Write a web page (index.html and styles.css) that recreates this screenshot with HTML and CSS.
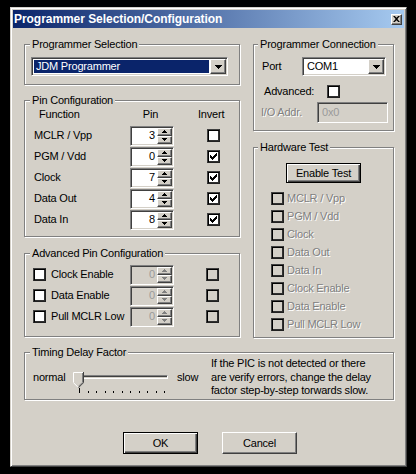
FILE: index.html
```html
<!DOCTYPE html>
<html>
<head>
<meta charset="utf-8">
<title>Programmer Selection/Configuration</title>
<link rel="stylesheet" href="styles.css">
</head>
<body>
<div class="window">
  <div class="titlebar">
    <span class="title">Programmer Selection/Configuration</span>
    <span class="close"><svg width="8" height="7" viewBox="0 0 8 7"><path d="M0 0h2l2 2 2-2h2L5 3.5 8 7H6L4 5 2 7H0l3-3.5z"/></svg></span>
  </div>
  <div class="client">
    <div class="columns">
      <div class="col col-left">
        <div class="group g-select">
          <span class="legend">Programmer Selection</span>
          <div class="combo combo-prog">
            <span class="combo-text sel">JDM Programmer</span>
            <span class="btn combo-btn"><svg width="7" height="4" viewBox="0 0 7 4"><path d="M0 0h7v1h-1v1h-1v1h-1v1h-1v-1h-1v-1h-1v-1h-1z"/></svg></span>
          </div>
        </div>

        <div class="group g-pins">
          <span class="legend">Pin Configuration</span>
          <div class="pin-grid">
            <span class="h-func">Function</span><span class="h-pin">Pin</span><span class="h-inv">Invert</span>

            <span class="lbl">MCLR / Vpp</span>
            <span class="spin"><span class="spin-val">3</span><span class="spin-btns"><span class="btn sb"><svg width="5" height="3" viewBox="0 0 5 3"><path d="M2 0h1v1h1v1h1v1H0V2h1V1h1z"/></svg></span><span class="btn sb"><svg width="5" height="3" viewBox="0 0 5 3"><path d="M0 0h5v1H4v1H3v1H2V2H1V1H0z"/></svg></span></span></span>
            <span class="cb inv"></span>

            <span class="lbl">PGM / Vdd</span>
            <span class="spin"><span class="spin-val">0</span><span class="spin-btns"><span class="btn sb"><svg width="5" height="3" viewBox="0 0 5 3"><path d="M2 0h1v1h1v1h1v1H0V2h1V1h1z"/></svg></span><span class="btn sb"><svg width="5" height="3" viewBox="0 0 5 3"><path d="M0 0h5v1H4v1H3v1H2V2H1V1H0z"/></svg></span></span></span>
            <span class="cb inv"><svg width="7" height="7" viewBox="0 0 7 7"><path d="M0 2h1v3H0zM1 3h1v3H1zM2 4h1v3H2zM3 3h1v3H3zM4 2h1v3H4zM5 1h1v3H5zM6 0h1v3H6z"/></svg></span>

            <span class="lbl">Clock</span>
            <span class="spin"><span class="spin-val">7</span><span class="spin-btns"><span class="btn sb"><svg width="5" height="3" viewBox="0 0 5 3"><path d="M2 0h1v1h1v1h1v1H0V2h1V1h1z"/></svg></span><span class="btn sb"><svg width="5" height="3" viewBox="0 0 5 3"><path d="M0 0h5v1H4v1H3v1H2V2H1V1H0z"/></svg></span></span></span>
            <span class="cb inv"><svg width="7" height="7" viewBox="0 0 7 7"><path d="M0 2h1v3H0zM1 3h1v3H1zM2 4h1v3H2zM3 3h1v3H3zM4 2h1v3H4zM5 1h1v3H5zM6 0h1v3H6z"/></svg></span>

            <span class="lbl">Data Out</span>
            <span class="spin"><span class="spin-val">4</span><span class="spin-btns"><span class="btn sb"><svg width="5" height="3" viewBox="0 0 5 3"><path d="M2 0h1v1h1v1h1v1H0V2h1V1h1z"/></svg></span><span class="btn sb"><svg width="5" height="3" viewBox="0 0 5 3"><path d="M0 0h5v1H4v1H3v1H2V2H1V1H0z"/></svg></span></span></span>
            <span class="cb inv"><svg width="7" height="7" viewBox="0 0 7 7"><path d="M0 2h1v3H0zM1 3h1v3H1zM2 4h1v3H2zM3 3h1v3H3zM4 2h1v3H4zM5 1h1v3H5zM6 0h1v3H6z"/></svg></span>

            <span class="lbl">Data In</span>
            <span class="spin"><span class="spin-val">8</span><span class="spin-btns"><span class="btn sb"><svg width="5" height="3" viewBox="0 0 5 3"><path d="M2 0h1v1h1v1h1v1H0V2h1V1h1z"/></svg></span><span class="btn sb"><svg width="5" height="3" viewBox="0 0 5 3"><path d="M0 0h5v1H4v1H3v1H2V2H1V1H0z"/></svg></span></span></span>
            <span class="cb inv"><svg width="7" height="7" viewBox="0 0 7 7"><path d="M0 2h1v3H0zM1 3h1v3H1zM2 4h1v3H2zM3 3h1v3H3zM4 2h1v3H4zM5 1h1v3H5zM6 0h1v3H6z"/></svg></span>
          </div>
        </div>

        <div class="group g-adv">
          <span class="legend">Advanced Pin Configuration</span>
          <div class="adv-grid">
            <span class="cb"></span>
            <span class="lbl">Clock Enable</span>
            <span class="spin dis"><span class="spin-val">0</span><span class="spin-btns"><span class="btn sb"><svg width="5" height="3" viewBox="0 0 5 3"><path d="M2 0h1v1h1v1h1v1H0V2h1V1h1z"/></svg></span><span class="btn sb"><svg width="5" height="3" viewBox="0 0 5 3"><path d="M0 0h5v1H4v1H3v1H2V2H1V1H0z"/></svg></span></span></span>
            <span class="cb dis inv2"></span>

            <span class="cb"></span>
            <span class="lbl">Data Enable</span>
            <span class="spin dis"><span class="spin-val">0</span><span class="spin-btns"><span class="btn sb"><svg width="5" height="3" viewBox="0 0 5 3"><path d="M2 0h1v1h1v1h1v1H0V2h1V1h1z"/></svg></span><span class="btn sb"><svg width="5" height="3" viewBox="0 0 5 3"><path d="M0 0h5v1H4v1H3v1H2V2H1V1H0z"/></svg></span></span></span>
            <span class="cb dis inv2"></span>

            <span class="cb"></span>
            <span class="lbl">Pull MCLR Low</span>
            <span class="spin dis"><span class="spin-val">0</span><span class="spin-btns"><span class="btn sb"><svg width="5" height="3" viewBox="0 0 5 3"><path d="M2 0h1v1h1v1h1v1H0V2h1V1h1z"/></svg></span><span class="btn sb"><svg width="5" height="3" viewBox="0 0 5 3"><path d="M0 0h5v1H4v1H3v1H2V2H1V1H0z"/></svg></span></span></span>
            <span class="cb dis inv2"></span>
          </div>
        </div>
      </div>

      <div class="col col-right">
        <div class="group g-conn">
          <span class="legend">Programmer Connection</span>
          <div class="conn-row">
            <span class="port-lbl">Port</span>
            <div class="combo combo-port">
              <span class="combo-text">COM1</span>
              <span class="btn combo-btn"><svg width="7" height="4" viewBox="0 0 7 4"><path d="M0 0h7v1h-1v1h-1v1h-1v1h-1v-1h-1v-1h-1v-1h-1z"/></svg></span>
            </div>
          </div>
          <div class="adv-row">
            <span class="adv-lbl">Advanced:</span>
            <span class="cb"></span>
          </div>
          <div class="io-row">
            <span class="io-lbl disabled">I/O Addr.</span>
            <span class="edit dis">0x0</span>
          </div>
        </div>

        <div class="group g-hw">
          <span class="legend">Hardware Test</span>
          <div class="hw-btn-row"><span class="button default hw-btn">Enable Test</span></div>
          <ul class="hw-list">
            <li><span class="cb dis"></span><span class="disabled">MCLR / Vpp</span></li>
            <li><span class="cb dis"></span><span class="disabled">PGM / Vdd</span></li>
            <li><span class="cb dis"></span><span class="disabled">Clock</span></li>
            <li><span class="cb dis"></span><span class="disabled">Data Out</span></li>
            <li><span class="cb dis"></span><span class="disabled">Data In</span></li>
            <li><span class="cb dis"></span><span class="disabled">Clock Enable</span></li>
            <li><span class="cb dis"></span><span class="disabled">Data Enable</span></li>
            <li><span class="cb dis"></span><span class="disabled">Pull MCLR Low</span></li>
          </ul>
        </div>
      </div>
    </div>

    <div class="group g-timing">
      <span class="legend">Timing Delay Factor</span>
      <span class="t-normal">normal</span>
      <div class="slider">
        <span class="track"></span>
        <svg class="thumb" width="11" height="16" viewBox="0 0 11 16">
          <path d="M0 0H11V10.5L5.5 16L0 10.5Z" fill="#D4D0C8"/>
          <path d="M0.5 10.5V0.5H10" stroke="#fff" fill="none"/>
          <path d="M0.5 10.7L5.3 15.5" stroke="#fff" fill="none"/>
          <path d="M10.5 0V10.7L5.5 15.7" stroke="#404040" fill="none"/>
          <path d="M9.5 1V10.3L5.5 14.3" stroke="#808080" fill="none"/>
        </svg>
        <div class="ticks">
          <i class="tick first"></i><i class="tick"></i><i class="tick"></i><i class="tick"></i><i class="tick"></i><i class="tick"></i><i class="tick"></i><i class="tick"></i><i class="tick"></i><i class="tick"></i><i class="tick"></i>
        </div>
      </div>
      <span class="t-slow">slow</span>
      <p class="t-help">If the PIC is not detected or there<br>are verify errors, change the delay<br>factor step-by-step torwards slow.</p>
    </div>

    <div class="buttons">
      <span class="button default dlg-btn">OK</span>
      <span class="button dlg-btn">Cancel</span>
    </div>
  </div>
</div>
</body>
</html>
```

FILE: styles.css
```css
* { box-sizing: border-box; }
html, body { margin: 0; padding: 0; }
body {
  background: #000;
  width: 416px;
  height: 474px;
  overflow: hidden;
  font-family: "Liberation Sans", Arial, sans-serif;
  font-size: 11px;
  letter-spacing: -0.2px;
  line-height: 13px;
  color: #000;
}

.window {
  margin: 7px 0 0 10px;
  width: 397px;
  height: 460px;
  background: #D4D0C8;
  border: 1px solid;
  border-color: #D4D0C8 #404040 #404040 #D4D0C8;
  box-shadow: inset 1px 1px 0 #fff, inset -1px -1px 0 #808080;
  padding: 2px;
}

.titlebar {
  height: 18px;
  display: flex;
  align-items: center;
  justify-content: space-between;
  padding: 0 1px 0 1px;
  background: linear-gradient(to right, #0A246A, #A6CAF0);
  color: #fff;
}
.title {
  font-weight: bold;
  font-size: 12px;
  letter-spacing: -0.05px;
}
.close {
  width: 11px;
  height: 11px;
  margin-right: 1px;
  display: flex;
  align-items: center;
  justify-content: center;
  background: #D4D0C8;
  border: 1px solid;
  border-color: #fff #404040 #404040 #fff;
  box-shadow: inset -1px -1px 0 #808080;
}
.close svg { width: 7px; height: 6px; }

.client { padding: 0 0 0 11px; }

.columns {
  display: flex;
  gap: 13px;
  padding-top: 16px;
  align-items: flex-start;
}
.col { display: flex; flex-direction: column; }
.col-left { width: 216px; }
.col-right { width: 141px; }

/* group box (etched) */
.group {
  position: relative;
  border: 1px solid #808080;
  box-shadow: inset 1px 1px 0 #fff, 1px 1px 0 #fff;
}
.legend {
  position: absolute;
  top: -7px;
  left: 5px;
  padding: 0 2px;
  background: #D4D0C8;
  line-height: 13px;
  white-space: nowrap;
}
.col-right .legend { left: 4px; }

/* raised button face */
.btn {
  display: flex;
  align-items: center;
  justify-content: center;
  background: #D4D0C8;
  border: 1px solid;
  border-color: #fff #404040 #404040 #fff;
  box-shadow: inset -1px -1px 0 #808080;
}

/* sunken field */
.combo, .spin, .edit {
  border: 1px solid;
  border-color: #808080 #fff #fff #808080;
  box-shadow: inset 1px 1px 0 #404040, inset -1px -1px 0 #D4D0C8;
  background: #fff;
}

.combo {
  display: flex;
  height: 19px;
  padding: 1px;
}
.combo-text {
  flex: 1;
  margin: 1px;
  padding-left: 2px;
  display: flex;
  align-items: center;
  white-space: nowrap;
}
.combo-text.sel { background: #0A246A; color: #fff; }
.combo-btn { width: 16px; }

/* Programmer Selection */
.g-select {
  height: 41px;
  padding: 12px 0 0 6px;
}
.combo-prog { width: 197px; }

/* Pin configuration */
.g-pins {
  margin-top: 15px;
  height: 137px;
  padding: 3px 0 0 9px;
}
.pin-grid {
  display: grid;
  grid-template-columns: 96px 44px 1fr;
  grid-auto-rows: 21px;
  align-items: center;
}
.h-func { padding-left: 5px; }
.h-pin { text-align: center; padding-right: 3px; }
.h-inv { margin-left: 24px; }
.cb.inv { margin-left: 33px; }

.spin {
  display: flex;
  width: 44px;
  height: 20px;
  padding: 1px;
}
.spin-val {
  flex: 1;
  display: flex;
  align-items: center;
  justify-content: flex-end;
  padding-right: 2px;
}
.spin-btns {
  width: 15px;
  display: flex;
  flex-direction: column;
}
.sb { height: 8px; flex: 0 0 8px; }
.spin.dis { background: #D4D0C8; }
.spin.dis .spin-val { color: #9a9a9a; }
.spin.dis .sb svg { fill: #808080; }

/* checkbox */
.cb {
  display: inline-flex;
  width: 13px;
  height: 13px;
  align-items: center;
  justify-content: center;
  background: #fff;
  border: 1px solid;
  border-color: #404040 #202020 #202020 #404040;
  box-shadow: inset 1px 1px 0 #000, inset -1px -1px 0 #303030;
  justify-self: start;
}
.cb.dis { background: #D4D0C8; }

/* Advanced pin config */
.g-adv {
  margin-top: 16px;
  height: 84px;
  padding: 10px 0 0 8px;
}
.adv-grid {
  display: grid;
  grid-template-columns: 18px 79px 44px 1fr;
  grid-auto-rows: 21px;
  align-items: center;
}
.cb.inv2 { margin-left: 32px; }

/* Programmer connection */
.g-conn {
  height: 87px;
  padding: 12px 0 0 8px;
}
.conn-row { display: flex; align-items: center; }
.port-lbl { width: 40px; }
.combo-port { width: 84px; }
.adv-row {
  display: flex;
  align-items: center;
  margin-top: 9px;
  height: 13px;
  padding-left: 2px;
}
.adv-lbl { width: 63px; }
.io-row {
  display: flex;
  align-items: center;
  margin-top: 4px;
  margin-left: -1px;
}
.io-lbl { width: 56px; }
.edit {
  width: 71px;
  height: 21px;
  display: flex;
  align-items: center;
  padding-left: 4px;
}
.edit.dis { background: #D4D0C8; color: #9a9a9a; }

.disabled { color: #808080; text-shadow: 1px 1px 0 #fff; }

/* Hardware test */
.g-hw {
  margin-top: 16px;
  height: 191px;
  padding: 15px 0 0 0;
}
.hw-btn-row { display: flex; justify-content: center; }
.button {
  display: flex;
  align-items: center;
  justify-content: center;
  background: #D4D0C8;
  border: 1px solid;
  border-color: #fff #404040 #404040 #fff;
  box-shadow: inset -1px -1px 0 #808080;
}
.button.default {
  border: 1px solid #000;
  box-shadow: inset 1px 1px 0 #fff, inset -1px -1px 0 #404040, inset -2px -2px 0 #808080;
}
.hw-btn { width: 75px; height: 20px; }
.hw-list {
  list-style: none;
  margin: 6px 0 0 0;
  padding: 0 0 0 17px;
}
.hw-list li {
  display: flex;
  align-items: center;
  gap: 3px;
  height: 18px;
}

/* Timing */
.g-timing {
  margin-top: 14px;
  width: 370px;
  height: 48px;
  display: flex;
  align-items: center;
  padding: 3px 0 0 8px;
}
.t-normal { width: 40px; flex: none; }
.slider {
  position: relative;
  width: 97px;
  height: 22px;
  flex: none;
  align-self: flex-start;
  margin-top: 16px;
}
.track {
  position: absolute;
  left: 9px;
  top: 3px;
  width: 86px;
  height: 4px;
  border: 1px solid;
  border-color: #808080 #fff #fff #808080;
  box-shadow: inset 1px 1px 0 #404040;
  background: #D4D0C8;
}
.thumb { position: absolute; left: 0; top: 0; }
.ticks {
  position: absolute;
  left: 6px;
  top: 16px;
  width: 86px;
  height: 5px;
  display: flex;
  justify-content: space-between;
  align-items: flex-end;
}
.tick { display: block; width: 1px; height: 2px; background: #000; }
.tick.first { height: 5px; }
.t-slow { margin-left: 7px; width: 34px; flex: none; }
.t-help {
  margin: 0;
  line-height: 13.5px;
  white-space: nowrap;
}

/* Dialog buttons */
.buttons {
  display: flex;
  gap: 24px;
  margin-top: 32px;
  padding-left: 99px;
}
.dlg-btn { width: 75px; height: 22px; }
```
